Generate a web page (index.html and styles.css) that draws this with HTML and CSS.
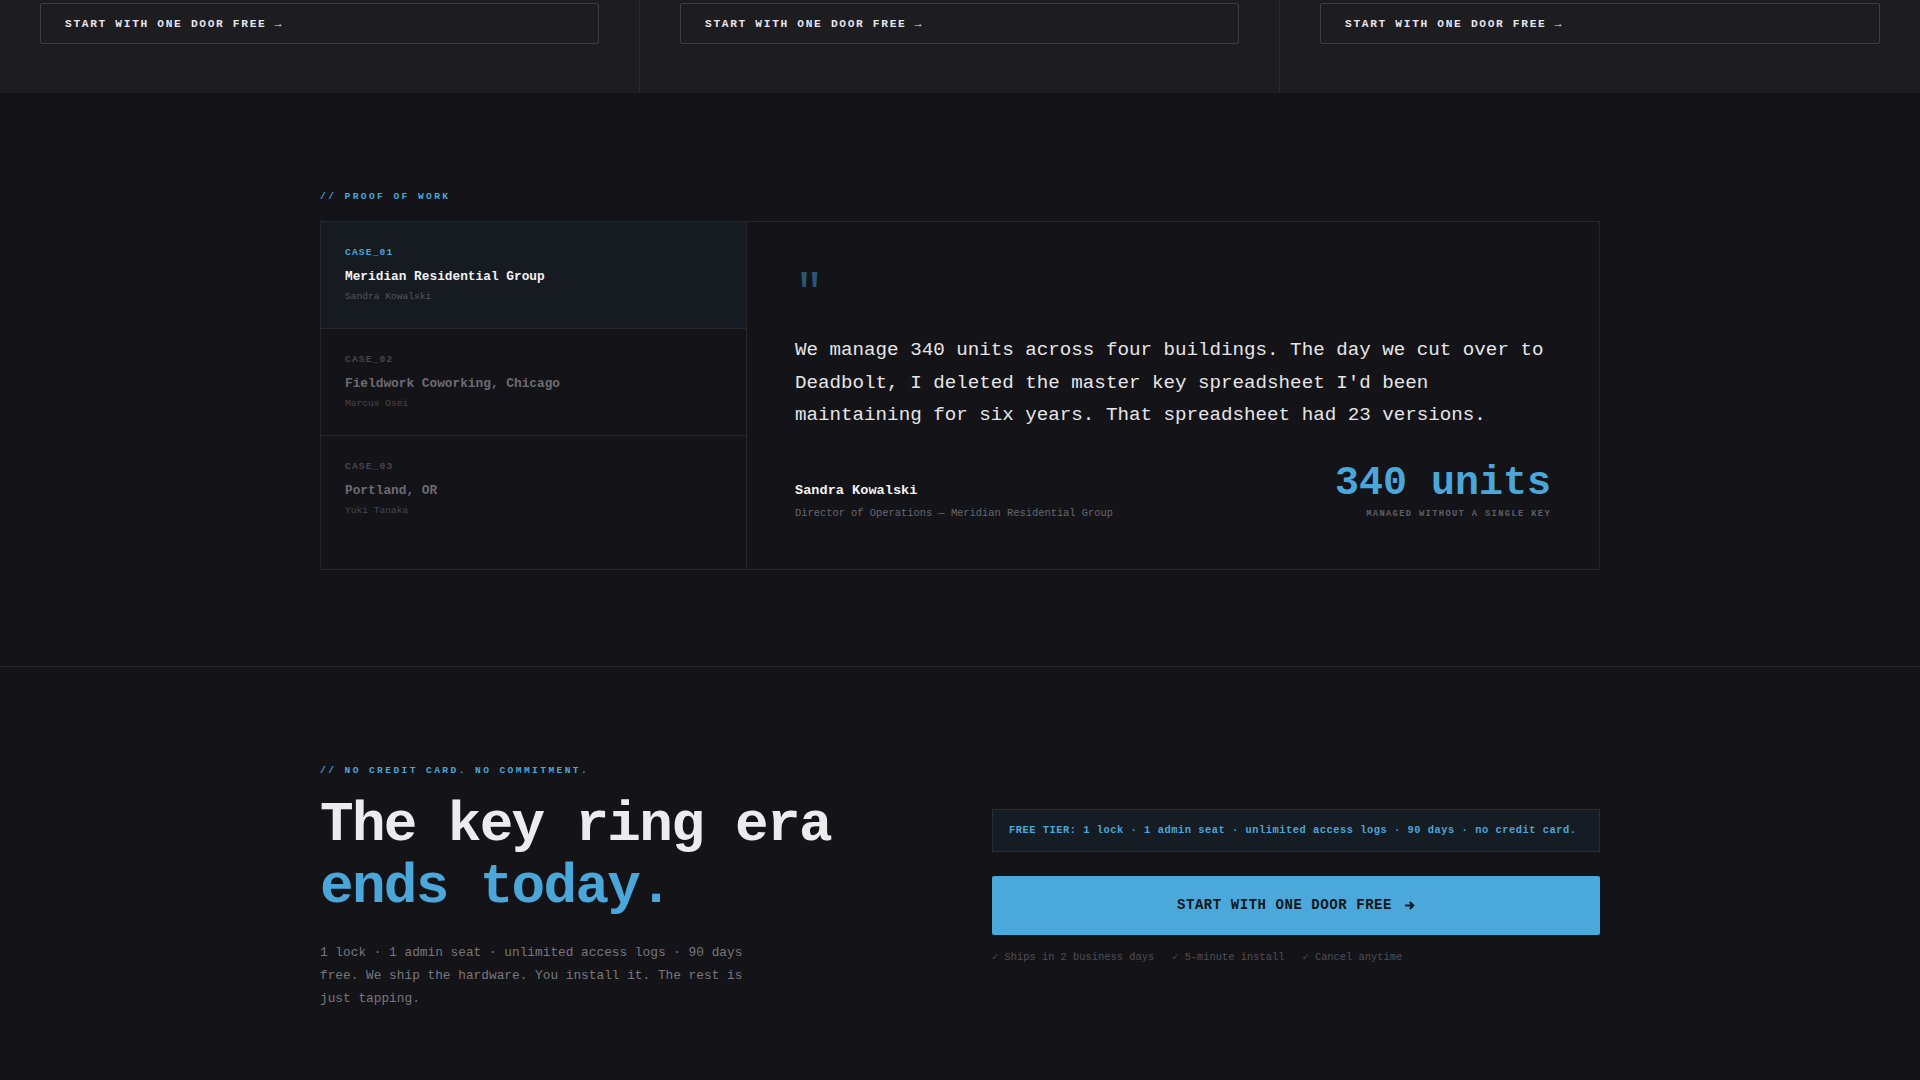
FILE: index.html
```html
<!DOCTYPE html>
<html lang="en">
<head>
<meta charset="utf-8">
<title>Deadbolt</title>
<link rel="stylesheet" href="styles.css">
</head>
<body>
<section class="plans">
  <div class="plan"><a class="plan-btn" href="#">START WITH ONE DOOR FREE →</a></div>
  <div class="plan"><a class="plan-btn" href="#">START WITH ONE DOOR FREE →</a></div>
  <div class="plan"><a class="plan-btn" href="#">START WITH ONE DOOR FREE →</a></div>
</section>

<section class="proof">
  <div class="container">
    <div class="eyebrow">// PROOF OF WORK</div>
    <div class="case-card">
      <ul class="case-list">
        <li class="case active">
          <div class="case-id">CASE_01</div>
          <div class="case-title">Meridian Residential Group</div>
          <div class="case-name">Sandra Kowalski</div>
        </li>
        <li class="case">
          <div class="case-id">CASE_02</div>
          <div class="case-title">Fieldwork Coworking, Chicago</div>
          <div class="case-name">Marcus Osei</div>
        </li>
        <li class="case">
          <div class="case-id">CASE_03</div>
          <div class="case-title">Portland, OR</div>
          <div class="case-name">Yuki Tanaka</div>
        </li>
      </ul>
      <div class="case-detail">
        <div class="quote-mark">"</div>
        <p class="quote">We manage 340 units across four buildings. The day we cut over to Deadbolt, I deleted the master key spreadsheet I'd been maintaining for six years. That spreadsheet had 23 versions.</p>
        <div class="quote-foot">
          <div class="author">
            <div class="author-name">Sandra Kowalski</div>
            <div class="author-role">Director of Operations — Meridian Residential Group</div>
          </div>
          <div class="stat">
            <div class="stat-value">340 units</div>
            <div class="stat-label">MANAGED WITHOUT A SINGLE KEY</div>
          </div>
        </div>
      </div>
    </div>
  </div>
</section>

<section class="cta">
  <div class="container cta-grid">
    <div class="cta-copy">
      <div class="eyebrow">// NO CREDIT CARD. NO COMMITMENT.</div>
      <h2 class="cta-title">The key ring era<br><span class="accent">ends today.</span></h2>
      <p class="cta-text">1 lock · 1 admin seat · unlimited access logs · 90 days free. We ship the hardware. You install it. The rest is just tapping.</p>
    </div>
    <div class="cta-action">
      <div class="tier"><strong>FREE TIER:</strong> 1 lock · 1 admin seat · unlimited access logs · 90 days · no credit card.</div>
      <a class="cta-btn" href="#">START WITH ONE DOOR FREE
        <svg class="cta-arrow" width="11" height="9" viewBox="0 0 11 9" aria-hidden="true"><path d="M1 4.5H9.2M5.8 1L9.3 4.5L5.8 8" fill="none" stroke="#15161b" stroke-width="2"/></svg>
      </a>
      <ul class="perks">
        <li>✓ Ships in 2 business days</li>
        <li>✓ 5-minute install</li>
        <li>✓ Cancel anytime</li>
      </ul>
    </div>
  </div>
</section>
</body>
</html>
```

FILE: styles.css
```css
* { box-sizing: border-box; }

html, body {
  margin: 0;
  padding: 0;
}

body {
  background: #141418;
  color: #e8e8ea;
  font-family: "Liberation Mono", "Courier New", monospace;
}

a { text-decoration: none; }

ul { list-style: none; margin: 0; padding: 0; }

.container {
  width: 1280px;
  margin: 0 auto;
}

/* ---------- plans strip ---------- */
.plans {
  display: grid;
  grid-template-columns: repeat(3, 1fr);
  background: #1c1c21;
}

.plan {
  padding: 3px 40px 49px;
  border-right: 1px solid #28282e;
}

.plan:last-child { border-right: none; }

.plan-btn {
  display: block;
  height: 41px;
  line-height: 40px;
  padding: 0 24px;
  border: 1px solid #3d3d44;
  border-radius: 2px;
  color: #e6e6e8;
  font-size: 11.2px;
  font-weight: 700;
  letter-spacing: 0.15em;
}

/* ---------- proof ---------- */
.proof {
  padding: 96px 0;
}

.eyebrow {
  color: #4ba6d9;
  font-size: 9.6px;
  font-weight: 700;
  letter-spacing: 0.25em;
  line-height: 15px;
  margin-bottom: 17px;
}

.case-card {
  display: grid;
  grid-template-columns: 1fr 2fr;
  border: 1px solid #26262c;
}

.case-list {
  border-right: 1px solid #26262c;
}

.case {
  padding: 25px 24px 23px;
  border-bottom: 1px solid #26262c;
}

.case:last-child { border-bottom: none; }

.case.active {
  background: #161b22;
}

.case-id {
  font-size: 9.6px;
  font-weight: 700;
  letter-spacing: 0.12em;
  line-height: 12px;
  color: #46464c;
  margin-bottom: 10px;
}

.case-title {
  font-size: 12.8px;
  font-weight: 700;
  line-height: 16px;
  color: #6c6c72;
}

.case-name {
  font-size: 9.6px;
  line-height: 16px;
  margin-top: 4px;
  color: #46464c;
}

.case.active .case-id { color: #4ba6d9; }
.case.active .case-title { color: #f2f2f4; }
.case.active .case-name { color: #55555c; }

.case-detail {
  padding: 48px;
}

.quote-mark {
  font-size: 48px;
  line-height: 1;
  height: 48px;
  color: #2b5676;
  margin-bottom: 16px;
}

.quote {
  margin: 0;
  font-size: 19.2px;
  line-height: 1.7;
  color: #e6e6e8;
}

.quote-foot {
  display: flex;
  justify-content: space-between;
  align-items: flex-end;
  margin-top: 32px;
}

.author-name {
  font-size: 13.6px;
  font-weight: 700;
  line-height: 20px;
  color: #f2f2f4;
}

.author-role {
  margin-top: 4px;
  font-size: 10.4px;
  line-height: 16px;
  color: #67676e;
}

.stat {
  text-align: right;
}

.stat-value {
  font-size: 40px;
  font-weight: 700;
  line-height: 1;
  color: #4ba6d9;
}

.stat-label {
  margin-top: 4px;
  font-size: 8.8px;
  font-weight: 700;
  letter-spacing: 0.15em;
  line-height: 13px;
  color: #5e5e65;
}

/* ---------- CTA ---------- */
.cta {
  border-top: 1px solid #26262c;
  padding: 96px 0 96px;
}

.cta-grid {
  display: grid;
  grid-template-columns: 1fr 1fr;
  gap: 64px;
  align-items: center;
}

.cta-copy .eyebrow {
  margin-bottom: 17px;
}

.cta-title {
  margin: 0;
  font-size: 56px;
  font-weight: 700;
  line-height: 1.1;
  letter-spacing: -0.03em;
  color: #ececee;
}

.accent { color: #4ba6d9; }

.cta-text {
  margin: 23px 0 0;
  max-width: 440px;
  font-size: 12.8px;
  line-height: 1.8;
  color: #77777e;
}

.tier {
  padding: 13px 16px;
  border: 1px solid #22303c;
  background: #161c24;
  color: #4ba6d9;
  font-size: 10.4px;
  line-height: 15px;
  letter-spacing: 0.05em;
  font-weight: 700;
}

.tier strong { font-weight: 700; }

.cta-btn {
  display: flex;
  align-items: center;
  justify-content: center;
  gap: 12px;
  margin-top: 24px;
  height: 59px;
  background: #4ba8da;
  border-radius: 2px;
  color: #15161b;
  font-size: 14px;
  font-weight: 700;
  letter-spacing: 0.04em;
}

.cta-arrow { display: block; }

.perks {
  display: flex;
  gap: 18px;
  margin-top: 14px;
  font-size: 10.4px;
  line-height: 16px;
  color: #4e4e55;
}
```
